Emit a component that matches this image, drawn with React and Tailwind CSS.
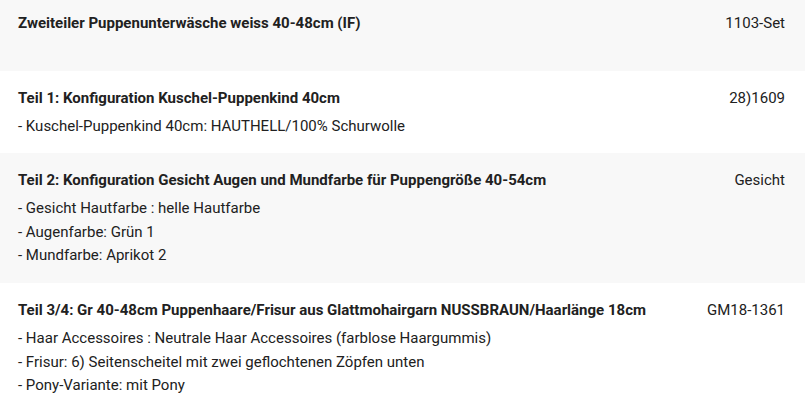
import React from 'react'

const ROWS = [
  {
    title: 'Zweiteiler Puppenunterwäsche weiss 40-48cm (IF)',
    code: '1103-Set',
    items: [],
    shade: true,
    box: 'h-[71px] pt-[13px]',
  },
  {
    title: 'Teil 1: Konfiguration Kuschel-Puppenkind 40cm',
    code: '28)1609',
    items: ['- Kuschel-Puppenkind 40cm: HAUTHELL/100% Schurwolle'],
    shade: false,
    box: 'h-[82px] pt-[17px]',
  },
  {
    title: 'Teil 2: Konfiguration Gesicht Augen und Mundfarbe für Puppengröße 40-54cm',
    code: 'Gesicht',
    items: ['- Gesicht Hautfarbe : helle Hautfarbe', '- Augenfarbe: Grün 1', '- Mundfarbe: Aprikot 2'],
    shade: true,
    box: 'h-[130px] pt-[17px]',
  },
  {
    title: 'Teil 3/4: Gr 40-48cm Puppenhaare/Frisur aus Glattmohairgarn NUSSBRAUN/Haarlänge 18cm',
    code: 'GM18-1361',
    items: [
      '- Haar Accessoires : Neutrale Haar Accessoires (farblose Haargummis)',
      '- Frisur: 6) Seitenscheitel mit zwei geflochtenen Zöpfen unten',
      '- Pony-Variante: mit Pony',
    ],
    shade: false,
    box: 'h-[134px] pt-[17px]',
  },
]

function OrderRow({ row }) {
  return (
    <div className={`flex justify-between pl-[18px] pr-[20px] ${row.box} ${row.shade ? 'bg-[#f8f8f8]' : 'bg-white'}`}>
      <div>
        <div className="font-bold text-[15px] leading-[20px]">{row.title}</div>
        {row.items.length > 0 ? (
          <div className="mt-[7px]">
            {row.items.map((item) => (
              <div key={item} className="text-[15px] leading-[23.5px]">
                {item}
              </div>
            ))}
          </div>
        ) : null}
      </div>
      <div className="text-[15px] leading-[20px] shrink-0 ml-4">{row.code}</div>
    </div>
  )
}

export default function App() {
  return (
    <div className="w-[805px] h-[416px] overflow-hidden bg-white text-[#212121] font-['Roboto',sans-serif]">
      {ROWS.map((row) => (
        <OrderRow key={row.code} row={row} />
      ))}
    </div>
  )
}
